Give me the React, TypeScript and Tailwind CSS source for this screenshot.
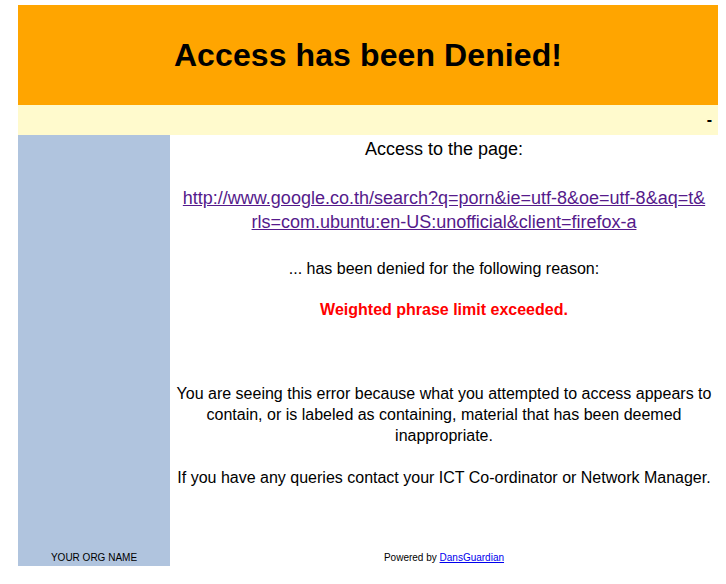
export default function App() {
  return (
    <div className="min-h-[584px] bg-white pt-[5px] pl-[18px] font-['Liberation_Sans',Arial,Helvetica,sans-serif] text-black">
      <div className="flex w-[700px] flex-col">
        {/* header */}
        <div className="flex h-[100px] items-center justify-center bg-[#FFA500]">
          <h1 className="text-[32px] leading-[37px] font-bold tracking-[0.1px]">Access has been Denied!</h1>
        </div>
        <div className="flex h-[30px] items-center justify-end bg-[#FFFACD] pr-[6px]">
          <span className="text-[16px] font-bold">-</span>
        </div>

        <div className="flex h-[431px]">
          {/* left column */}
          <div className="flex w-[152px] flex-col justify-end bg-[#B0C4DE] pb-[2px]">
            <p className="text-center text-[10px] leading-[12px]">YOUR ORG NAME</p>
          </div>

          {/* main column */}
          <div className="flex flex-1 flex-col items-center pt-[3px] pb-[2px] text-center">
            <p className="text-[18px] leading-[23px]">Access to the page:</p>
            <a
              href="#"
              className="mt-[25px] text-[18px] leading-[24px] text-[#551A8B] underline"
            >
              http://www.google.co.th/search?q=porn&amp;ie=utf-8&amp;oe=utf-8&amp;aq=t&amp;
              <br />
              rls=com.ubuntu:en-US:unofficial&amp;client=firefox-a
            </a>
            <p className="mt-[24px] text-[16px] leading-[21px]">
              ... has been denied for the following reason:
            </p>
            <p className="mt-[20px] text-[16px] leading-[21px] font-bold text-[#FF0000]">
              Weighted phrase limit exceeded.
            </p>
            <p className="mt-[63px] px-[6px] text-[16px] leading-[21px]">
              You are seeing this error because what you attempted to access appears to contain, or is
              labeled as containing, material that has been deemed inappropriate.
            </p>
            <p className="mt-[21px] text-[16px] leading-[21px]">
              If you have any queries contact your ICT Co-ordinator or Network Manager.
            </p>
            <p className="mt-auto text-[10px] leading-[12px]">
              Powered by{" "}
              <a href="#" className="text-[#0000EE] underline">
                DansGuardian
              </a>
            </p>
          </div>
        </div>
      </div>
    </div>
  );
}
